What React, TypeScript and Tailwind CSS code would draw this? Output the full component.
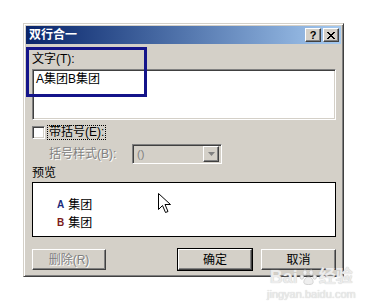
const font = "font-['Liberation_Sans','Noto_Sans_CJK_SC',sans-serif]";

const raised =
  "border border-t-white border-l-white border-r-[#404040] border-b-[#404040] shadow-[inset_-1px_-1px_0_#808080]";
const sunken =
  "border border-t-[#808080] border-l-[#808080] border-r-white border-b-white shadow-[inset_1px_1px_0_#404040,inset_-1px_-1px_0_#d4d0c8]";

const CapButton = ({ children }: { children: React.ReactNode }) => (
  <div className={`w-[16px] h-[14px] bg-[#d4d0c8] ${raised} flex items-center justify-center text-[11px] font-bold leading-none text-black`}>
    {children}
  </div>
);

const PushButton = ({
  label,
  disabled,
  isDefault,
  wide,
}: {
  label: string;
  disabled?: boolean;
  isDefault?: boolean;
  wide?: boolean;
}) => (
  <div
    className={`${wide ? "w-[75px]" : "w-[74px]"} h-[21px] bg-[#d4d0c8] ${
      isDefault ? "outline outline-1 outline-black" : ""
    } ${raised} flex items-center justify-center`}
  >
    <span
      className={`text-[12px] leading-none ${
        disabled ? "text-[#808080] [text-shadow:1px_1px_0_#fff]" : "text-black"
      }`}
    >
      {label}
    </span>
  </div>
);

export default function App() {
  return (
    <div className={`relative w-[386px] h-[307px] bg-white overflow-hidden ${font}`}>
      <div className="pt-[23px] pl-[23px]">
        <div className="w-[321px] h-[254px] bg-[#d4d0c8] border border-t-[#d4d0c8] border-l-[#d4d0c8] border-r-[#404040] border-b-[#404040] shadow-[inset_1px_1px_0_#fff,inset_-1px_-1px_0_#808080] p-[2px] flex flex-col">
          {/* title bar */}
          <div className="h-[18px] bg-gradient-to-r from-[#0a246a] to-[#a6caf0] flex items-center pl-[3px] pr-[2px]">
            <span className="text-white text-[12px] font-bold leading-none flex-1">双行合一</span>
            <div className="flex gap-[2px]">
              <CapButton>?</CapButton>
              <CapButton>
                <svg width="8" height="7" viewBox="0 0 8 7">
                  <path d="M0 0L7 7M1 0L8 7M7 0L0 7M8 0L1 7" stroke="black" strokeWidth="1" />
                </svg>
              </CapButton>
            </div>
          </div>

          {/* body */}
          <div className="flex flex-col pl-[6px] pr-[5px] text-[12px] text-black">
            <div className="mt-[8px] h-[14px] leading-[14px]">文字(T):</div>
            <div className={`mt-[3px] h-[51px] bg-white ${sunken} px-[3px] pt-[2px] leading-[14px]`}>A集团B集团</div>

            <div className="mt-[5px] h-[15px] flex items-center">
              <div className={`w-[13px] h-[13px] bg-white ${sunken}`} />
              <div className="ml-[2px] px-[1px] h-[15px] leading-[13px] border border-dotted border-black">带括号(E):</div>
            </div>

            <div className="mt-[4px] h-[20px] flex items-center">
              <span className="ml-[17px] w-[83px] text-[#808080] [text-shadow:1px_1px_0_#fff]">括号样式(B):</span>
              <div className={`w-[90px] h-[20px] bg-[#d4d0c8] ${sunken} flex items-center justify-between pl-[4px] pr-[2px]`}>
                <span className="text-[#808080] text-[11px]">()</span>
                <div className={`w-[16px] h-[16px] bg-[#d4d0c8] ${raised} flex items-center justify-center`}>
                  <svg width="7" height="4" viewBox="0 0 7 4">
                    <path d="M0 0H7L3.5 4Z" fill="#808080" />
                  </svg>
                </div>
              </div>
            </div>

            <div className="mt-[2px] h-[15px] leading-[15px]">预览</div>
            <div className="mt-[1px] h-[55px] bg-white border border-black flex flex-col pl-[24px] pt-[15px] gap-[4px] leading-[14px]">
              <div className="flex items-center gap-[4px]">
                <span className="text-[10px] font-bold text-[#1a2a7a]">A</span>
                <span>集团</span>
              </div>
              <div className="flex items-center gap-[4px]">
                <span className="text-[10px] font-bold text-[#7a1a1a]">B</span>
                <span>集团</span>
              </div>
            </div>

            <div className="mt-[12px] flex items-center">
              <PushButton label="删除(R)" disabled />
              <div className="flex-1" />
              <PushButton label="确定" isDefault />
              <div className="w-[9px]" />
              <PushButton label="取消" wide />
            </div>
          </div>
        </div>
      </div>

      {/* annotation box */}
      <div className="absolute left-[26px] top-[47px] w-[121px] h-[50px] border-[3px] border-[#14148a]" />

      {/* mouse cursor */}
      <svg className="absolute left-[158px] top-[193px]" width="13" height="20" viewBox="0 0 13 20">
        <path d="M0.5 0.5V16.5L4.5 12.5L7.5 19.5L10 18.5L7 11.5H12.5Z" fill="white" stroke="black" strokeWidth="1" />
      </svg>

      {/* watermark */}
      <div className="absolute left-[267px] top-[269px] flex flex-col items-center text-[#ececec] [text-shadow:0_0_1px_#bdbdbd]">
        <div className="flex items-center h-[16px]">
          <span className="text-[18px] font-bold leading-[16px]">Bai</span>
          <svg width="19" height="16" viewBox="0 0 20 18" className="mx-[1px]">
            <g fill="#efefef" stroke="#c4c4c4" strokeWidth="0.8">
              <ellipse cx="6" cy="4" rx="2.2" ry="3" />
              <ellipse cx="13" cy="4" rx="2.2" ry="3" />
              <ellipse cx="2.5" cy="9" rx="2" ry="2.5" />
              <ellipse cx="17" cy="9" rx="2" ry="2.5" />
              <path d="M10 9C6 9 4 14 5 16C6 18 14 18 15 16C16 14 14 9 10 9Z" />
            </g>
          </svg>
          <span className="text-[17px] font-bold leading-[16px]">经验</span>
        </div>
        <span className="mt-[3px] text-[11px] leading-[12px]">jingyan.baidu.com</span>
      </div>
    </div>
  );
}
